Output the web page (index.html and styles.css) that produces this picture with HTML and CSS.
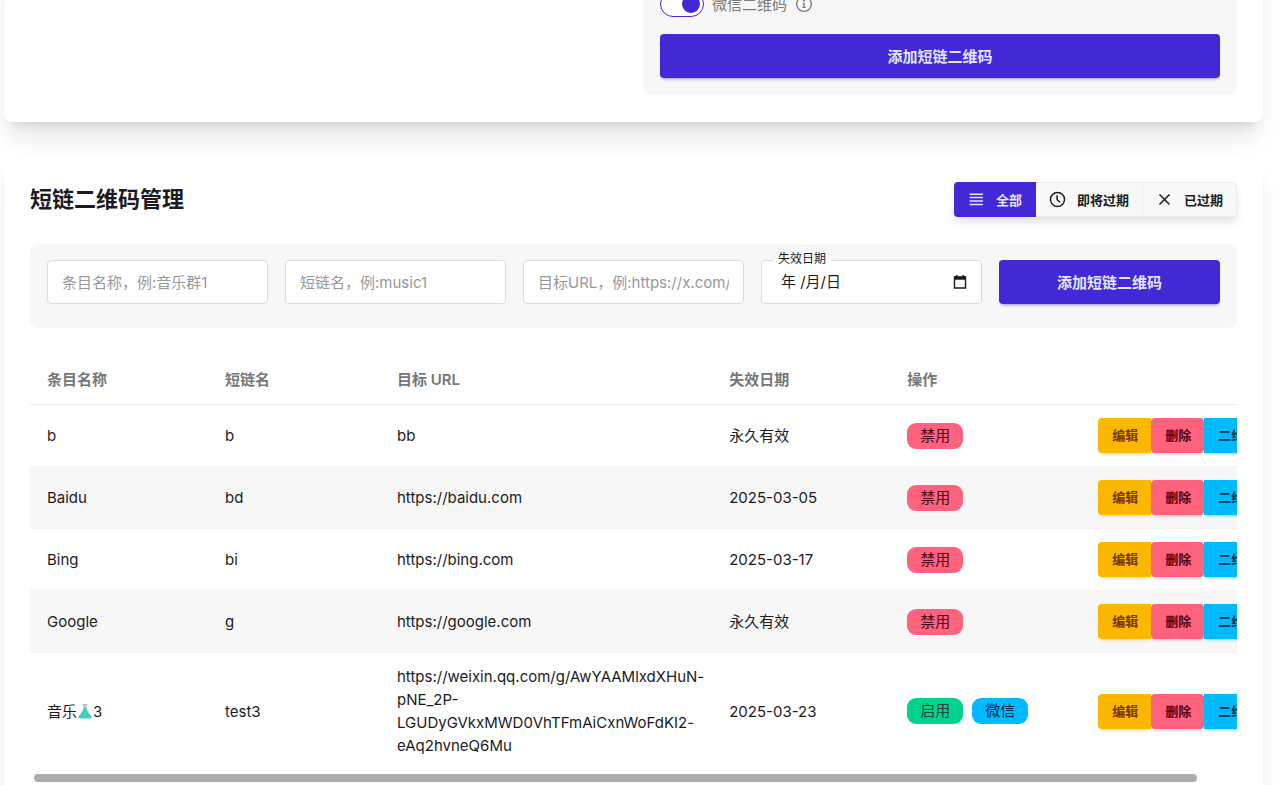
FILE: index.html
```html
<!DOCTYPE html>
<html lang="zh-CN">
<head>
  <meta charset="UTF-8">
  <meta name="viewport" content="width=device-width, initial-scale=1.0">
  <title>短链二维码管理</title>
  <link rel="stylesheet" href="styles.css">
</head>
<body>
  <main>
    <section class="card add-card">
      <div class="preview"></div>
      <form class="panel add-form">
        <div class="toggle-row">
          <input type="checkbox" id="wechat" class="toggle" checked>
          <label for="wechat">微信二维码</label>
          <svg viewBox="0 0 16 16" class="info-icon" aria-hidden="true">
            <circle cx="8" cy="8" r="6.5" fill="none" stroke="currentColor" stroke-width="1.2"/>
            <circle cx="8" cy="5" r="0.9" fill="currentColor"/>
            <path d="M6.8 7.4H8v3.6M6.6 11h2.9" fill="none" stroke="currentColor" stroke-width="1.2"/>
          </svg>
        </div>
        <button type="button" class="btn-primary">添加短链二维码</button>
      </form>
    </section>

    <section class="card manage-card">
      <header class="card-header">
        <h2>短链二维码管理</h2>
        <div class="join tabs">
          <button type="button" class="tab active">
            <svg viewBox="0 0 16 16" aria-hidden="true">
              <path d="M1.5 3h12.5M1.5 6.2h12.5M1.5 9.4h12.5M1.5 12.6h12.5" stroke="currentColor" stroke-width="1.4"/>
            </svg>
            全部
          </button>
          <button type="button" class="tab">
            <svg viewBox="0 0 16 16" aria-hidden="true">
              <circle cx="8" cy="8" r="6.6" fill="none" stroke="currentColor" stroke-width="1.4"/>
              <path d="M7.6 4v4.2l2.8 2.4" fill="none" stroke="currentColor" stroke-width="1.4"/>
            </svg>
            即将过期
          </button>
          <button type="button" class="tab">
            <svg viewBox="0 0 16 16" aria-hidden="true">
              <path d="M3.3 3.3l9.4 9.4M12.7 3.3l-9.4 9.4" stroke="currentColor" stroke-width="1.4"/>
            </svg>
            已过期
          </button>
        </div>
      </header>

      <form class="panel filter-form">
        <input type="text" class="input" aria-label="条目名称" placeholder="条目名称，例:音乐群1">
        <input type="text" class="input" aria-label="短链名" placeholder="短链名，例:music1">
        <input type="text" class="input" aria-label="目标URL" placeholder="目标URL，例:https://x.com/xxx">
        <div class="date-field">
          <label for="expire">失效日期</label>
          <input type="text" id="expire" class="input date-input" value="年 /月/日">
          <svg viewBox="0 0 16 16" class="date-icon" aria-hidden="true">
            <path d="M2.5 3h11v11h-11z" fill="none" stroke="currentColor" stroke-width="1.4"/>
            <path d="M2 2.5h12v3.3H2zM3.8 1h1.6v2H3.8zM10.6 1h1.6v2h-1.6z" fill="currentColor"/>
          </svg>
        </div>
        <button type="button" class="btn-primary">添加短链二维码</button>
      </form>

      <div class="table-wrap">
        <table>
          <colgroup>
            <col class="col-name">
            <col class="col-slug">
            <col class="col-url">
            <col class="col-date">
            <col class="col-status">
            <col class="col-actions">
          </colgroup>
          <thead>
            <tr>
              <th>条目名称</th>
              <th>短链名</th>
              <th>目标 URL</th>
              <th>失效日期</th>
              <th>操作</th>
              <th></th>
            </tr>
          </thead>
          <tbody>
            <tr>
              <td>b</td>
              <td>b</td>
              <td>bb</td>
              <td>永久有效</td>
              <td><span class="badge disabled">禁用</span></td>
              <td><div class="join actions"><button class="edit">编辑</button><button class="delete">删除</button><button class="qr">二维码</button></div></td>
            </tr>
            <tr>
              <td>Baidu</td>
              <td>bd</td>
              <td>https://baidu.com</td>
              <td>2025-03-05</td>
              <td><span class="badge disabled">禁用</span></td>
              <td><div class="join actions"><button class="edit">编辑</button><button class="delete">删除</button><button class="qr">二维码</button></div></td>
            </tr>
            <tr>
              <td>Bing</td>
              <td>bi</td>
              <td>https://bing.com</td>
              <td>2025-03-17</td>
              <td><span class="badge disabled">禁用</span></td>
              <td><div class="join actions"><button class="edit">编辑</button><button class="delete">删除</button><button class="qr">二维码</button></div></td>
            </tr>
            <tr>
              <td>Google</td>
              <td>g</td>
              <td>https://google.com</td>
              <td>永久有效</td>
              <td><span class="badge disabled">禁用</span></td>
              <td><div class="join actions"><button class="edit">编辑</button><button class="delete">删除</button><button class="qr">二维码</button></div></td>
            </tr>
            <tr>
              <td>音乐<svg viewBox="0 0 16 16" class="emoji" aria-hidden="true"><path d="M5.5 1h5v1.5h-.8v4H6.3v-4h-.8z" fill="#b4c6c3"/><path d="M6.3 5.5h3.4c.4 2.8 1.8 4.3 4.3 7 1.2 1.5.5 3-1.5 3h-9c-2 0-2.700-1.500-1.500-3 2.500-2.700 3.900-4.200 4.300-7z" fill="#3fd0bd"/></svg>3</td>
              <td>test3</td>
              <td>https://weixin.qq.com/g/AwYAAMlxdXHuN-pNE_2P-LGUDyGVkxMWD0VhTFmAiCxnWoFdKI2-eAq2hvneQ6Mu</td>
              <td>2025-03-23</td>
              <td><div class="badges"><span class="badge enabled">启用</span><span class="badge wechat">微信</span></div></td>
              <td><div class="join actions"><button class="edit">编辑</button><button class="delete">删除</button><button class="qr">二维码</button></div></td>
            </tr>
          </tbody>
        </table>
      </div>
      <div class="scroll-track"><div class="scroll-thumb"></div></div>
    </section>
  </main>
</body>
</html>
```

FILE: styles.css
```css
:root {
  --primary: #4328d6;
  --primary-text: #e0e7ff;
  --base-200: #f7f7f7;
  --border: #dcdcdc;
  --text: #1b1b1f;
  --warning: #fcb700;
  --error: #ff627d;
  --info: #00bafe;
  --success: #00d390;
}

* {
  margin: 0;
  padding: 0;
  box-sizing: border-box;
}

body {
  font-family: Inter, "Noto Sans CJK SC", sans-serif;
  font-size: 15px;
  line-height: 23px;
  background-color: #fff;
  color: var(--text);
  overflow-x: hidden;
}

/* page is scrolled past the top of the first card */
main {
  margin: -41px 17px 0 4px;
}

button {
  font-family: inherit;
  border: none;
  cursor: pointer;
}

/* Cards */
.card {
  background-color: #fff;
  border-radius: 8px;
  padding: 26px;
  box-shadow: 0 20px 25px -5px rgba(0, 0, 0, 0.1), 0 8px 10px -6px rgba(0, 0, 0, 0.1);
}

.manage-card {
  margin-top: 34px;
}

.panel {
  background-color: var(--base-200);
  border-radius: 8px;
}

/* Add form */
.add-card {
  display: grid;
  grid-template-columns: 1fr 1fr;
  gap: 19px;
  padding-bottom: 27px;
}

.add-form {
  padding: 6px 17px 17px;
}

.toggle-row {
  display: flex;
  align-items: center;
  gap: 8px;
  margin-bottom: 17px;
  color: #7c7c7f;
}

.toggle {
  appearance: none;
  width: 44px;
  height: 26px;
  padding: 3px;
  border: 1px solid var(--primary);
  border-radius: 13px;
  background-color: #fff;
}

.toggle::before {
  content: "";
  display: block;
  width: 18px;
  height: 18px;
  margin-left: 18px;
  border-radius: 50%;
  background-color: var(--primary);
}

.info-icon {
  width: 18px;
  height: 18px;
}

.btn-primary {
  width: 100%;
  height: 44px;
  padding-bottom: 2px;
  border-radius: 4px;
  background-color: var(--primary);
  color: var(--primary-text);
  font-size: 15px;
  font-weight: 600;
  box-shadow: 0 3px 3px -2px rgba(67, 40, 214, 0.5);
}

/* Title and tabs */
.card-header {
  display: flex;
  align-items: center;
  justify-content: space-between;
  margin-bottom: 27px;
}

h2 {
  font-size: 22px;
  line-height: 35px;
  font-weight: 700;
}

.join {
  display: flex;
}

.join button {
  height: 35px;
  font-size: 13px;
  font-weight: 600;
  white-space: nowrap;
}

.join button:first-child {
  border-radius: 4px 0 0 4px;
}

.join button:last-child {
  border-radius: 0 4px 4px 0;
}

.tabs {
  border-radius: 4px;
  box-shadow: 0 6px 8px -1px rgba(0, 0, 0, 0.12);
}

.tabs .tab {
  display: flex;
  align-items: center;
  gap: 11px;
  padding: 0 13px 1px;
  border: 1px solid #eee;
  border-left-width: 0;
  background-color: #f8f8f8;
  color: var(--text);
}

.tabs .active {
  padding-left: 14px;
  background-color: var(--primary);
  border-color: var(--primary);
  color: var(--primary-text);
}

.tab svg {
  width: 17px;
  height: 17px;
}

/* Filter form */
.filter-form {
  display: grid;
  grid-template-columns: repeat(5, 1fr);
  gap: 17px;
  padding: 16px 17px 24px;
  margin-bottom: 27px;
}

.input {
  width: 100%;
  height: 44px;
  padding: 0 14px;
  border: 1px solid var(--border);
  border-radius: 4px;
  background-color: #fff;
  color: var(--text);
  font-family: inherit;
  font-size: 15px;
}

.input::placeholder {
  color: #98989a;
}

.date-field {
  position: relative;
}

.date-field label {
  position: absolute;
  top: -10px;
  left: 12px;
  padding: 0 5px;
  font-size: 12px;
  line-height: 18px;
  background: linear-gradient(var(--base-200) 10px, #fff 10px);
}

.date-input {
  padding: 0 19px 3px;
}

.date-icon {
  position: absolute;
  top: 14px;
  right: 14px;
  width: 16px;
  height: 16px;
}

/* Table */
.table-wrap {
  overflow-x: auto;
  scrollbar-width: none;
}

.scroll-track {
  padding: 5px 4px 0;
}

.scroll-thumb {
  width: 97%;
  height: 8px;
  border-radius: 4px;
  background-color: #adadad;
}

table {
  width: 103%;
  table-layout: fixed;
  border-collapse: separate;
  border-spacing: 0;
}

.col-name {
  width: 178px;
}

.col-slug {
  width: 172px;
}

.col-url {
  width: auto;
}

.col-date {
  width: 178px;
}

.col-status {
  width: 191px;
}

.col-actions {
  width: 192px;
}

th,
td {
  padding: 12px 4px 12px 17px;
  text-align: left;
  vertical-align: middle;
}

th {
  height: 50px;
  border-bottom: 1px solid #ededed;
  color: #77777a;
  font-weight: 600;
}

td {
  height: 62px;
  overflow-wrap: break-word;
}

tbody tr:not(:last-child) td {
  border-bottom: 1px solid #f3f3f3;
}

tbody tr:nth-child(even) {
  background-color: var(--base-200);
}

.emoji {
  width: 16px;
  height: 16px;
  vertical-align: -2px;
}

.badges {
  display: flex;
  gap: 9px;
}

.badge {
  display: inline-block;
  height: 26px;
  padding: 0 13px;
  border-radius: 9px;
  line-height: 26px;
}

.disabled {
  background-color: var(--error);
  color: #4d0218;
}

.enabled {
  background-color: var(--success);
  color: #004c39;
}

.wechat {
  background-color: var(--info);
  color: #042e49;
}

.actions button {
  flex-shrink: 0;
  padding: 0 13px 2px 14px;
  border-radius: 4px;
}

.edit {
  background-color: var(--warning);
  color: #793205;
  box-shadow: 0 3px 3px -2px rgba(252, 183, 0, 0.5);
}

.delete {
  background-color: var(--error);
  color: #4d0218;
  box-shadow: 0 3px 3px -2px rgba(255, 98, 125, 0.5);
}

.qr {
  background-color: var(--info);
  color: #042e49;
  box-shadow: 0 3px 3px -2px rgba(0, 186, 254, 0.5);
}
```
